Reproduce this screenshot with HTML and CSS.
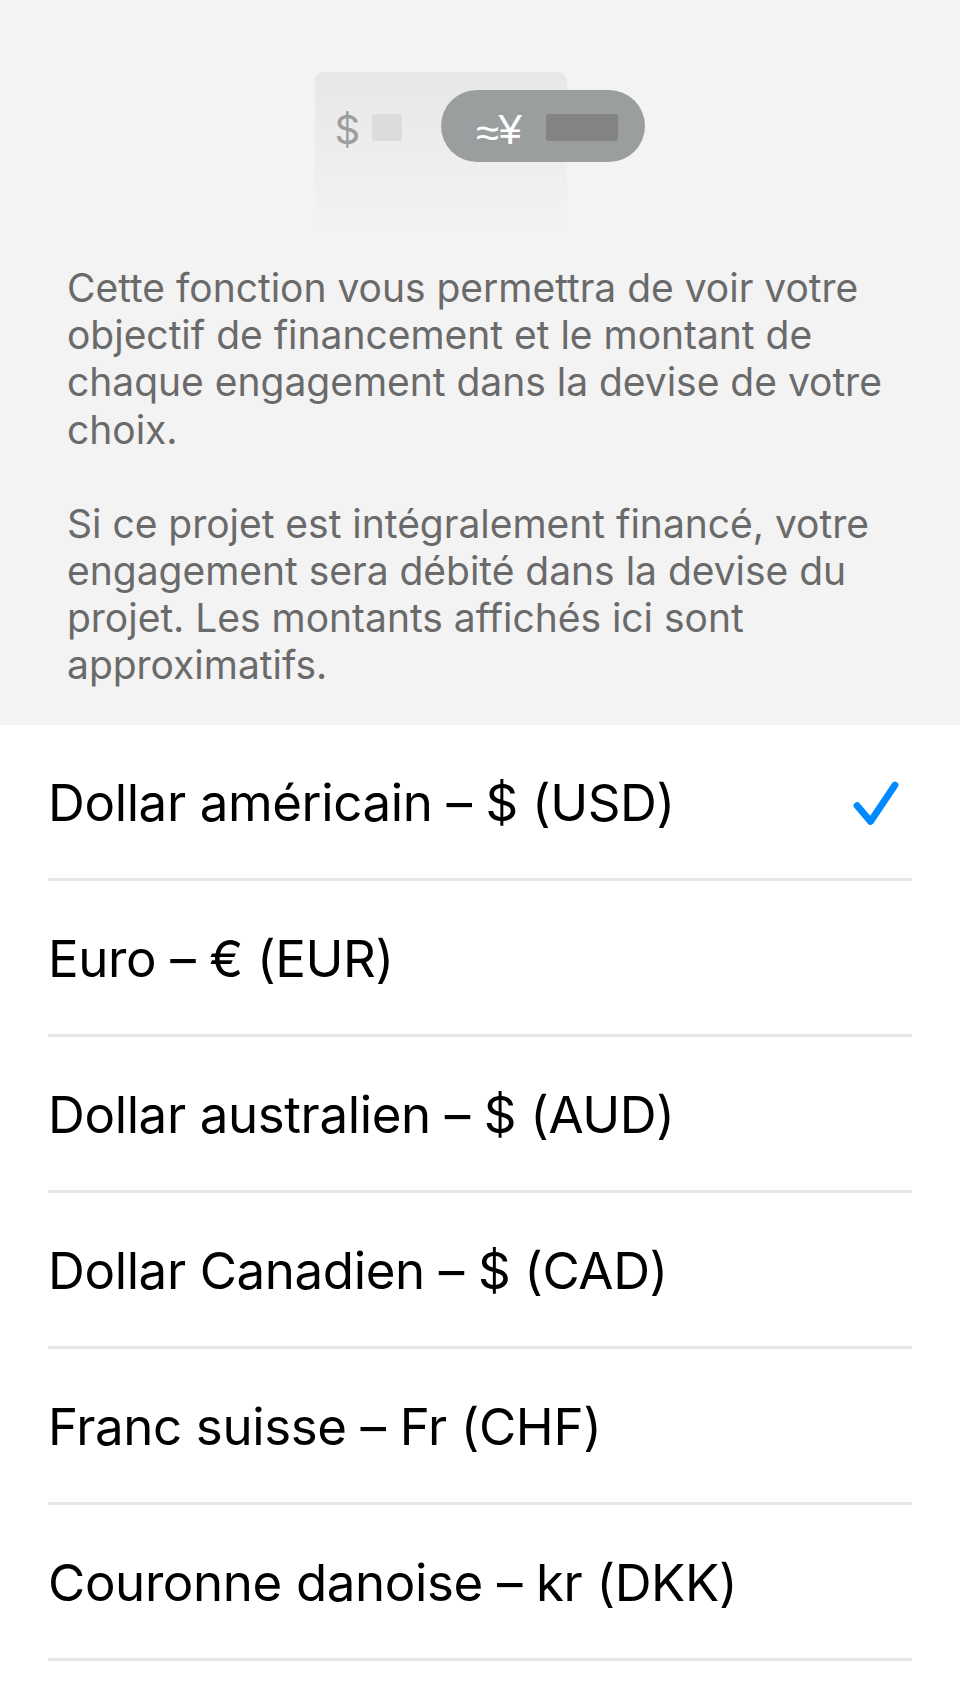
FILE: index.html
```html
<!DOCTYPE html>
<html lang="fr"><head><meta charset="utf-8"><title>Devise</title><link rel="stylesheet" href="styles.css"></head>
<body>
<header class="intro">
<svg class="art" width="330" height="160" viewBox="0 0 330 160" aria-hidden="true">
<defs><linearGradient id="fade" x1="0" y1="0" x2="0" y2="1"><stop offset="0" stop-color="#e7e7e7"/><stop offset="1" stop-color="#f3f3f3"/></linearGradient></defs>
<rect width="252" height="160" rx="9" fill="url(#fade)"/>
<text class="dollar" x="19.5" y="72">$</text>
<rect x="57" y="42" width="30" height="27" rx="3" fill="#dbdddd"/>
<rect x="126" y="18" width="204" height="72" rx="36" fill="#9b9e9e"/>
<text class="yen" x="161" y="75">≈<tspan x="183.4" y="72">¥</tspan></text>
<rect x="231" y="42" width="72" height="27" rx="3" fill="#828382"/>
</svg>
<p class="copy">Cette fonction vous permettra de voir votre<br>objectif de financement et le montant de<br>chaque engagement dans la devise de votre<br>choix.</p>
<p class="copy">Si ce projet est intégralement financé, votre<br>engagement sera débité dans la devise du<br>projet. Les montants affichés ici sont<br>approximatifs.</p>
</header>
<ul class="list">
<li class="row"><span>Dollar américain – $ (USD)</span><svg class="check" width="46" height="46" viewBox="0 0 46 46"><path d="M4 25.5L17.5 41.5L42 5" fill="none" stroke="#0389ff" stroke-width="6.8" stroke-linecap="round" stroke-linejoin="round"/></svg></li>
<li class="row"><span>Euro – € (EUR)</span></li>
<li class="row"><span>Dollar australien – $ (AUD)</span></li>
<li class="row"><span>Dollar Canadien – $ (CAD)</span></li>
<li class="row"><span>Franc suisse – Fr (CHF)</span></li>
<li class="row"><span>Couronne danoise – kr (DKK)</span></li>
</ul>
</body></html>
```
FILE: styles.css
```css
body { margin: 0; background: #fff; font-family: Inter, sans-serif; }
.intro { box-sizing: border-box; height: 725px; padding: 72px 60px 0 67px; background: #f3f3f3; }
.art { display: block; margin: 0 0 32px 248px; }
.dollar { font-size: 40px; fill: #9b9e9e; }
.yen { font-family: "Liberation Sans", sans-serif; font-size: 42px; fill: #fff; }
.copy { margin: 0 0 47px; font-size: 39px; line-height: 47.2px; letter-spacing: -0.02px; font-variant-ligatures: none; color: #6a6a6a; white-space: nowrap; }
.list { margin: 0; padding: 0 48px; list-style: none; }
.row { box-sizing: border-box; display: flex; justify-content: space-between; align-items: center; height: 156px; padding-top: 2px; border-bottom: 3px solid #e6e6e6; font-size: 51px; letter-spacing: -0.37px; color: #000; white-space: nowrap; }
.check { margin-right: 13px; }
```
